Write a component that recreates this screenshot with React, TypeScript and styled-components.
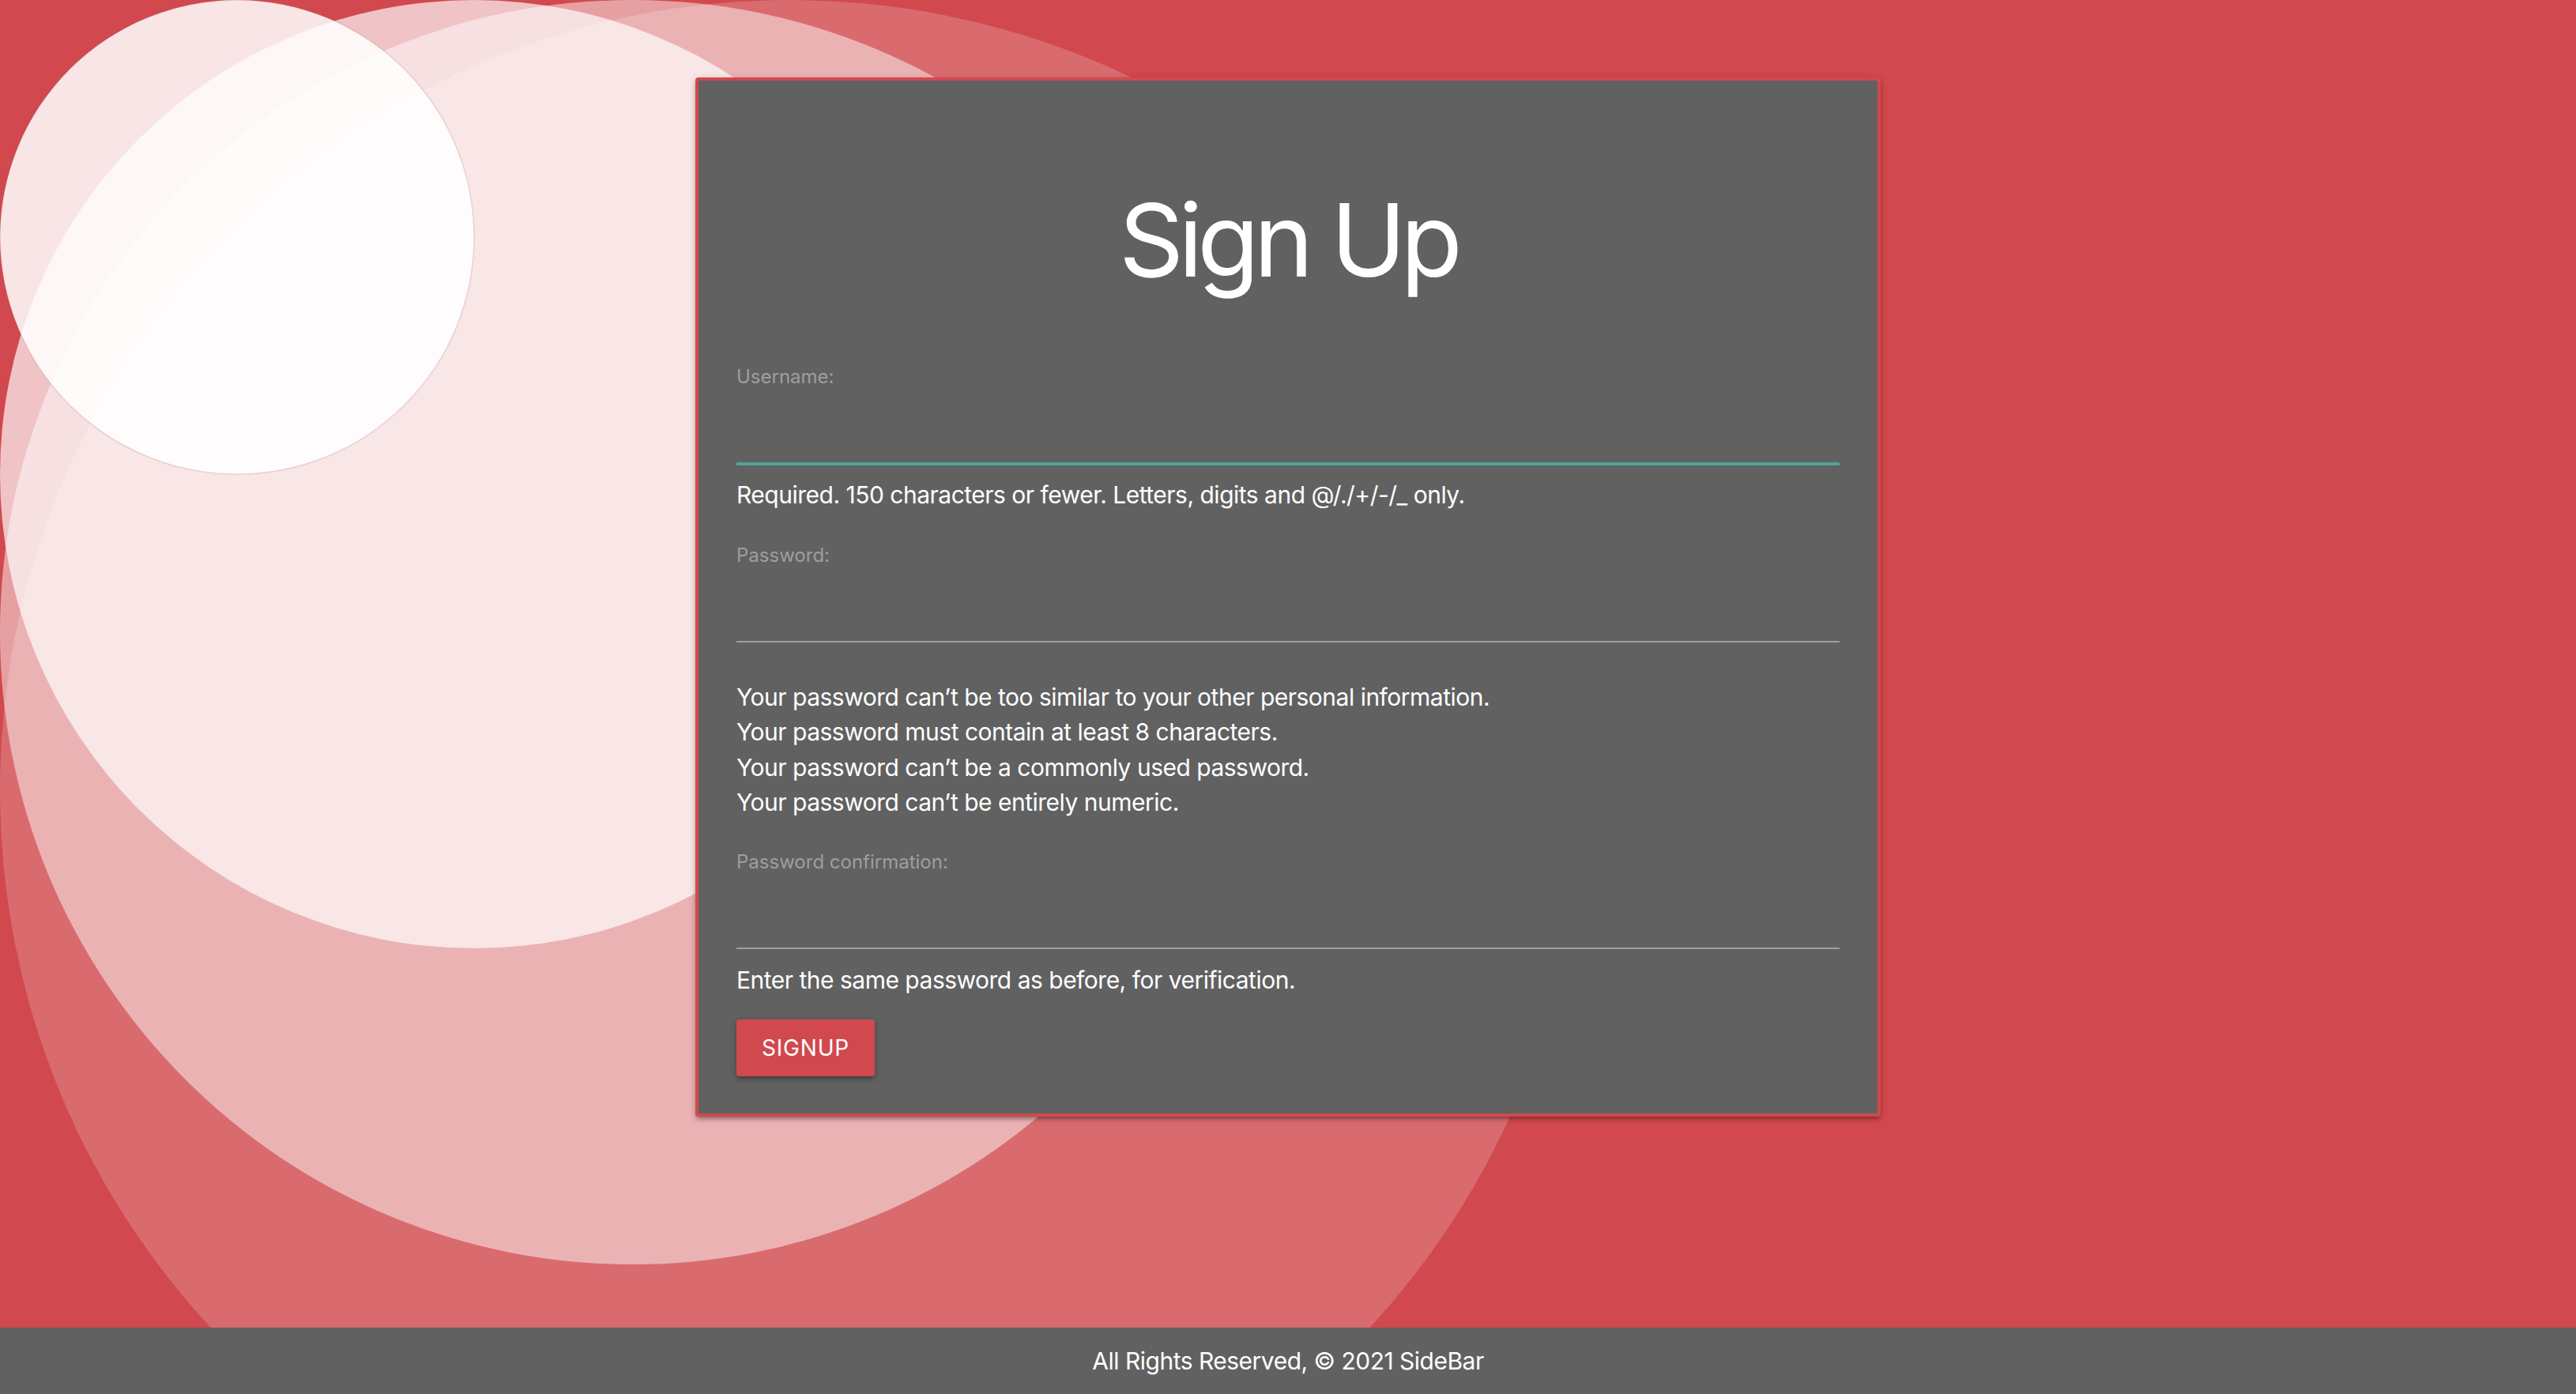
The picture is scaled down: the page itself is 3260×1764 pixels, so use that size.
import React from "react";
import styled, { createGlobalStyle } from "styled-components";

const GlobalStyle = createGlobalStyle`
  html, body {
    margin: 0;
    padding: 0;
    height: 100%;
  }
  body {
    font-family: Inter, "Noto Sans", Roboto, sans-serif;
    background: #d1494e;
    overflow: hidden;
  }
  #root {
    height: 100%;
  }
`;

const Page = styled.div`
  position: relative;
  min-height: 100vh;
  display: flex;
  flex-direction: column;
  overflow: hidden;
  background: #d1494e;
`;

const Backdrop = styled.svg`
  position: absolute;
  top: 0;
  left: 0;
  width: 2000px;
  height: 2000px;
  pointer-events: none;
`;

const Main = styled.main`
  position: relative;
  z-index: 1;
  flex: 1;
  display: flex;
  justify-content: center;
  align-items: flex-start;
  padding-top: 98px;
`;

const Card = styled.section`
  box-sizing: border-box;
  width: 1500px;
  border: 4px solid #d1494e;
  border-radius: 4px;
  background: #616161;
  box-shadow: 0 4px 4px 0 rgba(0, 0, 0, 0.14), 0 6px 2px -4px rgba(0, 0, 0, 0.12),
    0 2px 10px 0 rgba(0, 0, 0, 0.2);
  padding: 132px 48px 47px;
`;

const Title = styled.h1`
  margin: 0;
  text-align: center;
  color: #ffffff;
  font-size: 128px;
  line-height: 140px;
  font-weight: 400;
  letter-spacing: -7px;
`;

const Form = styled.form`
  display: flex;
  flex-direction: column;
  align-items: flex-start;
`;

const Field = styled.div<{ $first?: boolean }>`
  width: 100%;
  margin-top: ${(p) => (p.$first ? 88 : 39)}px;
`;

const Label = styled.label`
  display: block;
  font-size: 24px;
  line-height: 30px;
  color: #9e9e9e;
`;

const Input = styled.input<{ $focused?: boolean }>`
  display: block;
  box-sizing: border-box;
  width: 100%;
  height: 95px;
  margin: 0;
  padding: 0;
  border: none;
  border-bottom: 2px solid ${(p) => (p.$focused ? "#50a59a" : "#9e9e9e")};
  box-shadow: ${(p) => (p.$focused ? "0 2px 0 0 #50a59a" : "none")};
  background: transparent;
  outline: none;
  color: #ffffff;
  font-family: inherit;
  font-size: 30px;
`;

const Help = styled.p`
  margin: 17px 0 0;
  font-size: 30px;
  line-height: 45px;
  letter-spacing: -0.5px;
  color: #ffffff;
`;

const HelpList = styled.ul`
  margin: 47px 0 0;
  padding: 0;
  list-style: none;
  font-size: 30px;
  line-height: 44.3px;
  letter-spacing: -0.5px;
  color: #ffffff;
`;

const SubmitButton = styled.button`
  margin-top: 27px;
  height: 72px;
  padding: 0 32px;
  border: none;
  border-radius: 4px;
  background: #d1494e;
  color: #ffffff;
  font-family: inherit;
  font-size: 28px;
  line-height: 72px;
  letter-spacing: 0.8px;
  text-transform: uppercase;
  cursor: pointer;
  box-shadow: 0 4px 4px 0 rgba(0, 0, 0, 0.14), 0 6px 2px -4px rgba(0, 0, 0, 0.12),
    0 2px 10px 0 rgba(0, 0, 0, 0.2);
`;

const Footer = styled.footer`
  position: relative;
  z-index: 2;
  height: 84px;
  display: flex;
  align-items: center;
  justify-content: center;
  background: #616161;
  color: #ffffff;
  font-size: 30px;
  letter-spacing: -0.5px;
`;

const passwordRules = [
  "Your password can’t be too similar to your other personal information.",
  "Your password must contain at least 8 characters.",
  "Your password can’t be a commonly used password.",
  "Your password can’t be entirely numeric.",
];

const bubbles = [
  { size: 2000, alpha: 0.19 },
  { size: 1600, alpha: 0.48 },
  { size: 1200, alpha: 0.68 },
  { size: 600, alpha: 0.86 },
];

export default function App() {
  return (
    <>
      <GlobalStyle />
      <Page>
        <Backdrop viewBox="0 0 2000 2000" aria-hidden="true">
          {bubbles.map((b) => (
            <circle
              key={b.size}
              cx={b.size / 2}
              cy={b.size / 2}
              r={b.size / 2}
              fill={`rgba(255,255,255,${b.alpha})`}
              stroke={b.size === 600 ? "rgba(140,50,60,0.16)" : "none"}
              strokeWidth={b.size === 600 ? 1.5 : 0}
            />
          ))}
        </Backdrop>
        <Main>
          <Card>
            <Title>Sign Up</Title>
            <Form onSubmit={(e) => e.preventDefault()}>
              <Field $first>
                <Label htmlFor="id_username">Username:</Label>
                <Input id="id_username" type="text" $focused />
                <Help>Required. 150 characters or fewer. Letters, digits and @/./+/-/_ only.</Help>
              </Field>
              <Field>
                <Label htmlFor="id_password1">Password:</Label>
                <Input id="id_password1" type="password" />
                <HelpList>
                  {passwordRules.map((rule) => (
                    <li key={rule}>{rule}</li>
                  ))}
                </HelpList>
              </Field>
              <Field>
                <Label htmlFor="id_password2">Password confirmation:</Label>
                <Input id="id_password2" type="password" />
                <Help>Enter the same password as before, for verification.</Help>
              </Field>
              <SubmitButton type="submit">Signup</SubmitButton>
            </Form>
          </Card>
        </Main>
        <Footer>All Rights Reserved, © 2021 SideBar</Footer>
      </Page>
    </>
  );
}
